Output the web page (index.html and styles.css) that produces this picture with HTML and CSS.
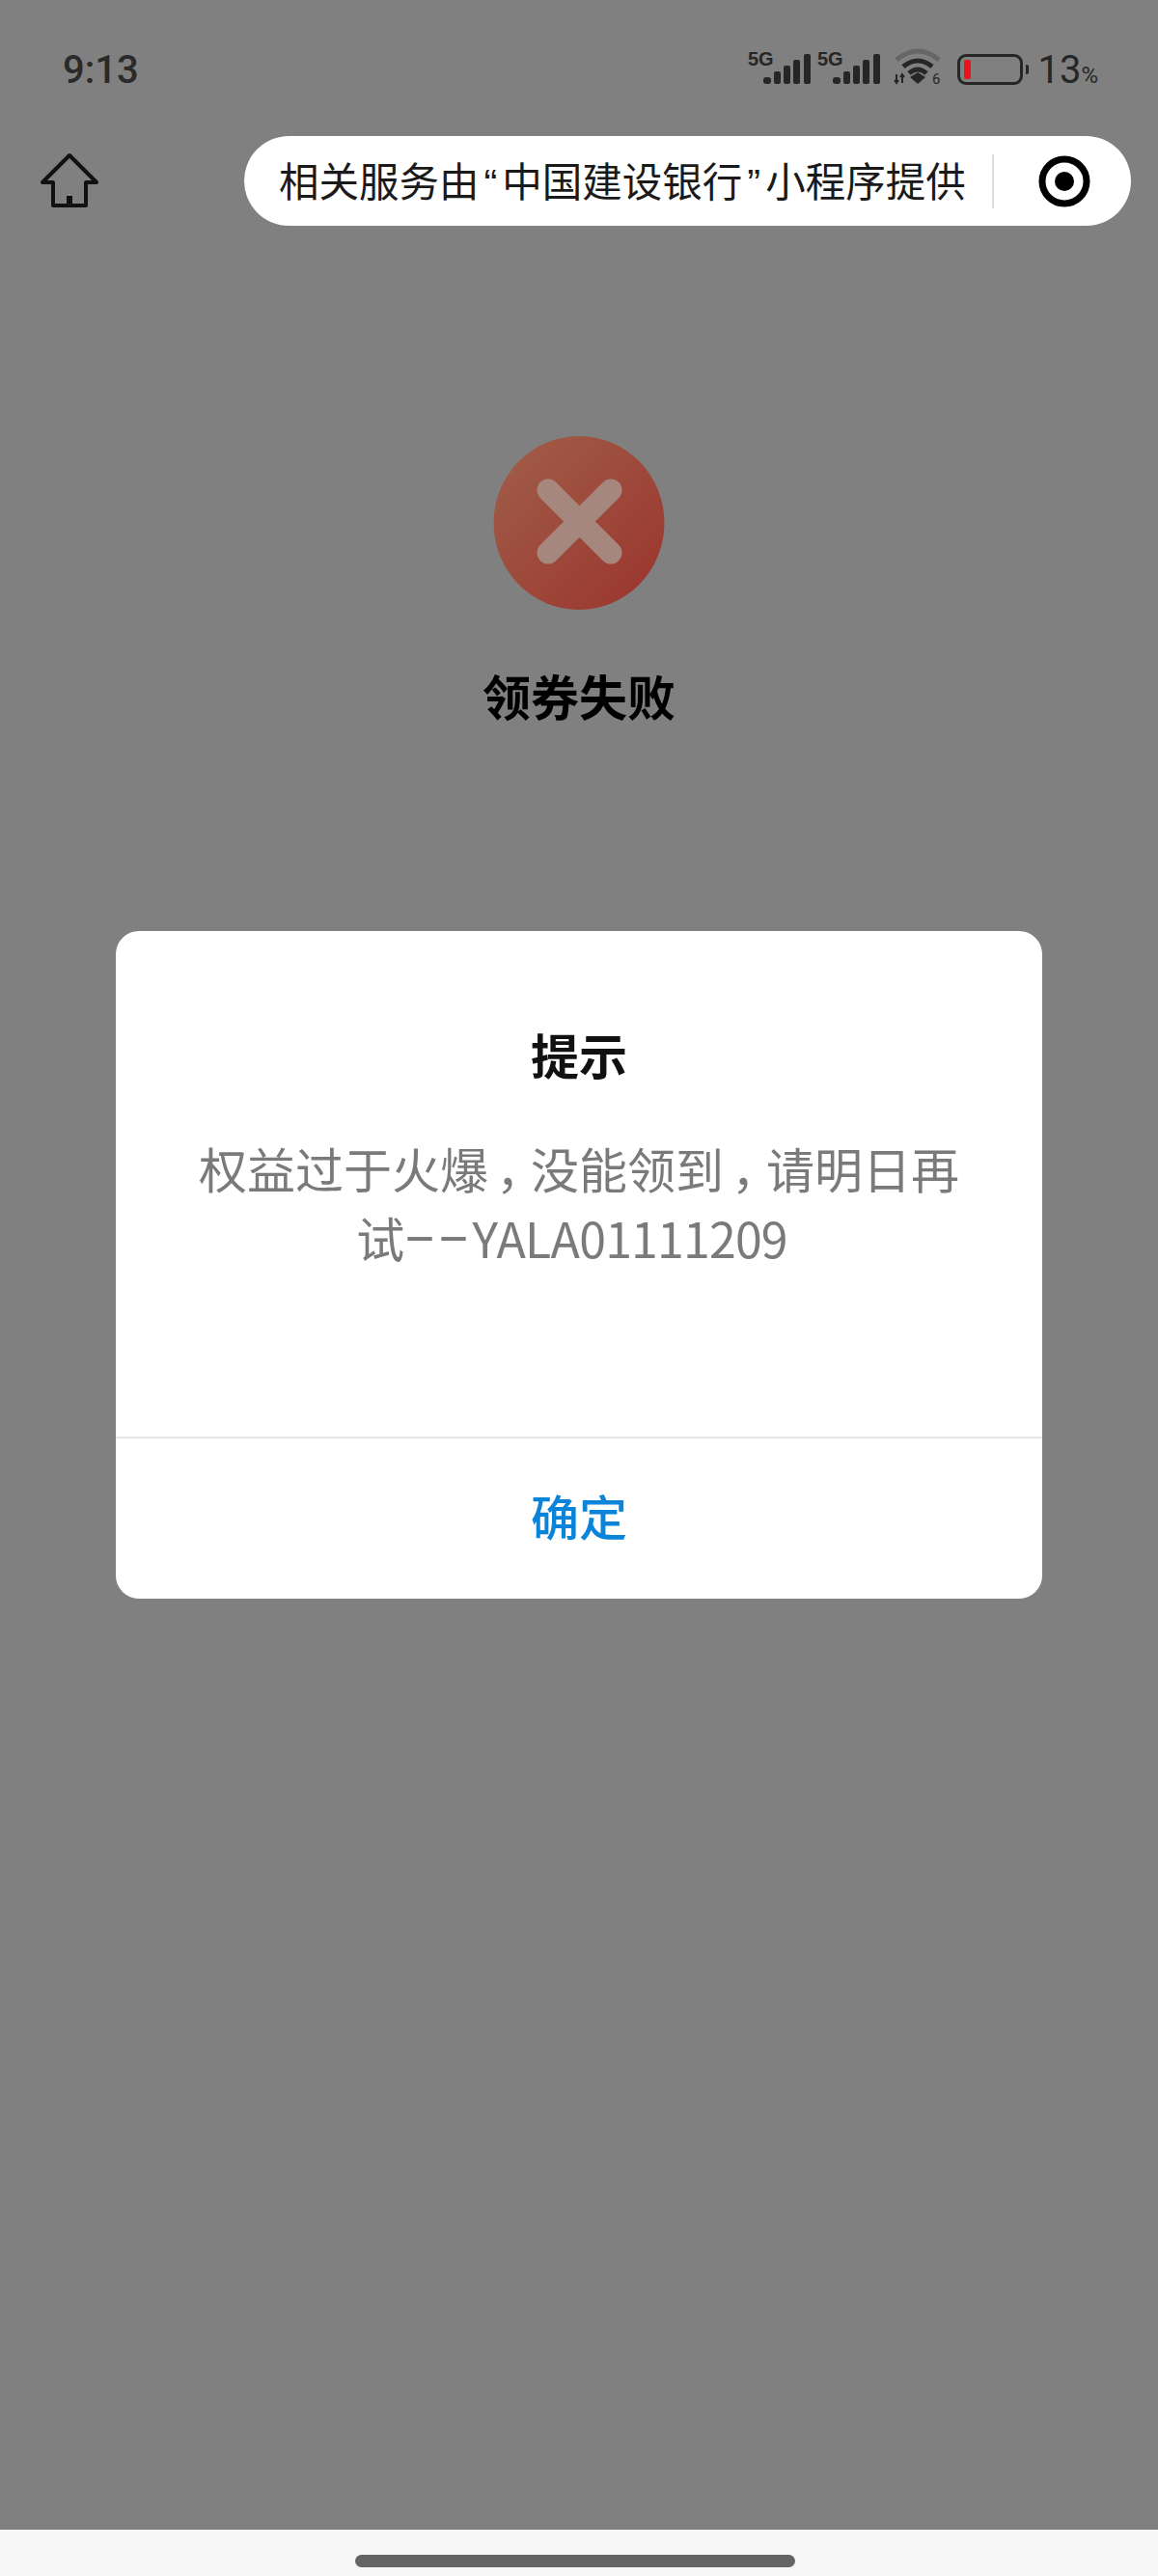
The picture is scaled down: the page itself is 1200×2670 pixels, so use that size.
FILE: index.html
```html
<!DOCTYPE html>
<html lang="zh-CN">
<head>
    <meta charset="UTF-8">
    <meta name="viewport" content="width=device-width, initial-scale=1.0">
    <title>领券失败</title>
    <link rel="stylesheet" href="styles.css">
</head>
<body>
    <div class="screen">
        <!-- 상태바 -->
        <div class="status-bar">
            <span class="clock">9:13</span>
            <div class="status-icons">
                <svg class="signal" width="66" height="40" viewBox="0 -4 66 40">
                    <text x="0" y="16" class="net-label">5G</text>
                    <rect x="16" y="28" width="8" height="7" rx="3" />
                    <rect x="27" y="22" width="7" height="13" rx="2" />
                    <rect x="37" y="16" width="7" height="19" rx="2" />
                    <rect x="47" y="10" width="7" height="25" rx="2" />
                    <rect x="58" y="4" width="7" height="31" rx="2" />
                </svg>
                <svg class="signal" width="66" height="40" viewBox="0 -4 66 40">
                    <text x="0" y="16" class="net-label">5G</text>
                    <rect x="16" y="28" width="8" height="7" rx="3" />
                    <rect x="27" y="22" width="7" height="13" rx="2" />
                    <rect x="37" y="16" width="7" height="19" rx="2" />
                    <rect x="47" y="10" width="7" height="25" rx="2" />
                    <rect x="58" y="4" width="7" height="31" rx="2" />
                </svg>
                <svg class="wifi" width="52" height="44" viewBox="0 0 52 44">
                    <path d="M3 12 Q25 -6 47 12" class="wifi-far" />
                    <path d="M10 19 Q25 7 40 19" class="wifi-near" />
                    <path d="M16 26 Q25 18 34 26" class="wifi-near" />
                    <path d="M17 30 L25 25 L33 30 L25 37 Z" class="wifi-dot" />
                    <path d="M3 27 V36 M1 33 L3 36 L5 33 M9 36 V27 M7 30 L9 27 L11 30" class="wifi-arrow" />
                    <text x="40" y="37" class="wifi-six">6</text>
                </svg>
                <div class="battery">
                    <div class="battery-body"><div class="battery-level"></div></div>
                    <div class="battery-tip"></div>
                </div>
                <span class="battery-text">13<small>%</small></span>
            </div>
        </div>

        <!-- 상단 네비 -->
        <div class="nav-bar">
            <svg class="home" width="62" height="60" viewBox="0 0 62 60">
                <path d="M31 3 L3 31 H14 V55 H48 V31 H59 Z" class="home-line" />
                <rect x="28" y="45" width="6" height="10" />
            </svg>
            <div class="capsule">
                <span class="capsule-text">相关服务由<span class="quote">“</span>中国建设银行<span class="quote">”</span>小程序提供</span>
                <span class="capsule-line"></span>
                <svg class="capsule-icon" width="54" height="54" viewBox="0 0 54 54">
                    <circle cx="27" cy="27" r="23" class="ring" />
                    <circle cx="27" cy="27" r="10" />
                </svg>
            </div>
        </div>

        <!-- 결과 -->
        <div class="result">
            <svg class="fail-icon" width="178" height="180" viewBox="0 0 178 180">
                <defs>
                    <linearGradient id="failBg" x1="0" y1="0" x2="1" y2="1">
                        <stop offset="0" stop-color="#a0604a" />
                        <stop offset="1" stop-color="#9b332c" />
                    </linearGradient>
                </defs>
                <ellipse cx="89" cy="90" rx="88.5" ry="90" fill="url(#failBg)" />
                <path d="M57 56 L122 121 M122 56 L57 121" class="fail-x" />
            </svg>
            <div class="result-title">领券失败</div>
        </div>

        <!-- 팝업 -->
        <div class="modal">
            <div class="modal-body">
                <div class="modal-title">提示</div>
                <div class="modal-text">权益过于火爆<span class="comma">，</span>没能领到<span class="comma">，</span>请明日再试<span class="dash">--</span><span class="code">YALA01111209</span></div>
            </div>
            <div class="modal-btn">确定</div>
        </div>
    </div>

    <div class="gesture-bar">
        <div class="handle"></div>
    </div>
</body>
</html>
```

FILE: styles.css
```css
html, body{
    margin: 0;
    padding: 0;
}
body{
    width: 1200px;
    height: 2670px;
    background-color: #f7f7f7;
    font-family: "Noto Sans CJK SC", "Noto Sans", sans-serif;
    overflow: hidden;
}
.screen{
    position: relative;  /* modal */
    height: 2622px;
    background-color: #808080;
}

/* status bar */
.status-bar{
    display: flex;
    justify-content: space-between;
    height: 141px;
    box-sizing: border-box;
    padding: 49px 62px 0 65px;
}
.clock{
    font-family: Roboto, sans-serif;
    font-size: 40px;
    font-weight: 500;
    line-height: 47px;
    color: #2a2a2a;
}
.status-icons{
    display: flex;
    align-items: flex-start;
}
.signal{
    margin: -1px 6px 0 0;
    fill: #262626;
}
.net-label{
    font-family: "Liberation Sans", sans-serif;
    font-size: 20px;
    font-weight: 700;
}
.wifi{
    margin: 1px 14px 0 7px;
}
.wifi-far, .wifi-near{
    fill: none;
    stroke-width: 5px;
}
.wifi-far{
    stroke: #666666;
}
.wifi-near{
    stroke: #262626;
}
.wifi-dot{
    fill: #262626;
}
.wifi-arrow{
    fill: none;
    stroke: #262626;
    stroke-width: 2px;
}
.wifi-six{
    font-family: Roboto, sans-serif;
    font-size: 15px;
    fill: #262626;
}
.battery{
    display: flex;
    align-items: center;
    margin: 7px 9px 0 0;
}
.battery-body{
    width: 68px;
    height: 32px;
    box-sizing: border-box;
    border: 3px solid #262626;
    border-radius: 9px;
    padding: 3px 4px;
}
.battery-level{
    width: 7px;
    height: 20px;
    background-color: #e8141c;
    border-radius: 2px;
}
.battery-tip{
    width: 3px;
    height: 10px;
    margin-left: 3px;
    background-color: #262626;
    border-radius: 0 2px 2px 0;
}
.battery-text{
    font-family: Roboto, sans-serif;
    font-size: 40px;
    font-weight: 400;
    line-height: 47px;
    color: #262626;
}
.battery-text small{
    font-size: 24px;
    font-weight: 400;
}

/* nav */
.nav-bar{
    display: flex;
    justify-content: space-between;
    align-items: center;
    height: 93px;
    padding: 0 28px 0 41px;
}
.home{
    fill: #111111;
}
.home-line{
    fill: none;
    stroke: #111111;
    stroke-width: 4px;
    stroke-linejoin: round;
}
.capsule{
    display: flex;
    align-items: center;
    width: 919px;
    height: 93px;
    box-sizing: border-box;
    padding-left: 36px;
    background-color: #ffffff;
    border-radius: 47px;
}
.capsule-text{
    font-size: 41.5px;
    line-height: 56px;
    white-space: nowrap;
    color: #1a1a1a;
}
.quote{
    font-family: "Liberation Sans", sans-serif;
    margin: 0 5px;
}
.capsule-line{
    width: 2px;
    height: 56px;
    margin-left: 27px;
    background-color: #dddddd;
}
.capsule-icon{
    margin-left: 46px;
    fill: #000000;
}
.ring{
    fill: none;
    stroke: #000000;
    stroke-width: 7px;
}

/* result */
.result{
    display: flex;
    flex-direction: column;
    align-items: center;
    padding-top: 218px;
}
.fail-icon{
    display: block;
}
.fail-x{
    fill: none;
    stroke: #a5877d;
    stroke-width: 23px;
    stroke-linecap: round;
}
.result-title{
    margin-top: 52px;
    font-size: 50px;
    font-weight: 700;
    line-height: 72px;
    color: #000000;
}

/* modal */
.modal{
    position: absolute;
    left: 120px;
    top: 965px;
    width: 960px;
    height: 692px;
    display: flex;
    flex-direction: column;
    background-color: #ffffff;
    border-radius: 24px;
    overflow: hidden;
}
.modal-body{
    flex: 1;
    padding: 91px 80px 0;
    text-align: center;
}
.modal-title{
    font-size: 50px;
    font-weight: 700;
    line-height: 72px;
    color: #111111;
}
.modal-text{
    margin-top: 46px;
    font-size: 50px;
    line-height: 72px;
    color: #7a7a7a;
}
.comma{
    margin-left: 8px;
    letter-spacing: -14px;
}
.dash{
    font-family: Roboto, sans-serif;
    font-size: 110px;
    font-weight: 200;
    line-height: 0;
    letter-spacing: 3px;
    vertical-align: -15px;
}
.code{
    margin-right: 15px;
    letter-spacing: -0.8px;
}
.modal-btn{
    height: 166px;
    border-top: 2px solid #e5e5e5;
    font-size: 50px;
    font-weight: 500;
    line-height: 158px;
    text-align: center;
    color: #0a84d9;
}

/* bottom */
.gesture-bar{
    display: flex;
    justify-content: center;
    height: 48px;
    padding-top: 26px;
    box-sizing: border-box;
}
.handle{
    width: 456px;
    height: 13px;
    margin-left: -8px;
    background-color: #646464;
    border-radius: 7px;
}
```
